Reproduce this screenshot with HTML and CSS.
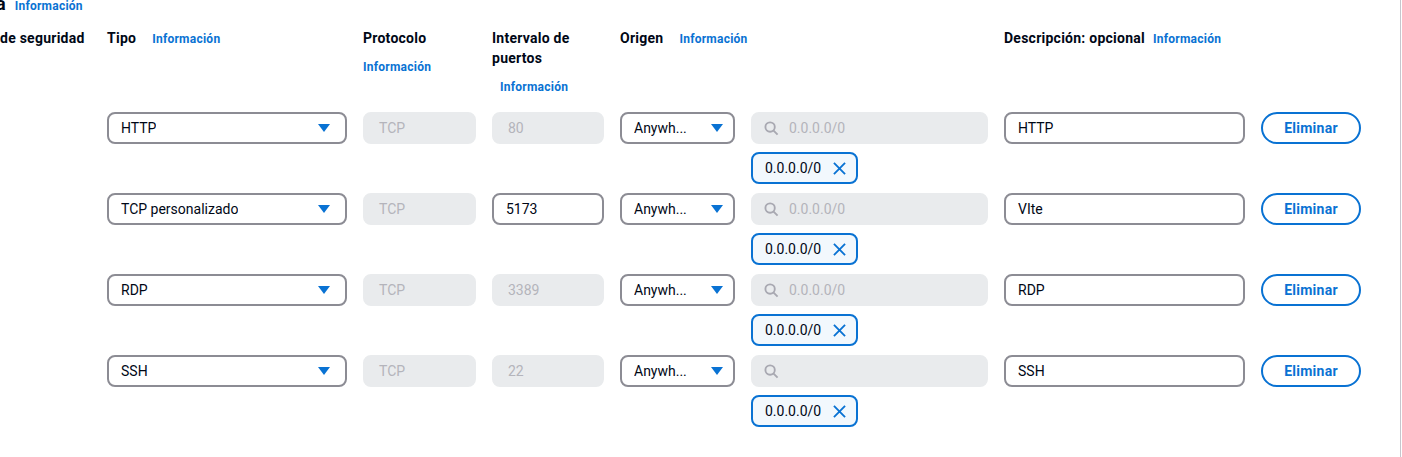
FILE: index.html
```html
<!DOCTYPE html>
<html lang="es">
<head>
<meta charset="utf-8">
<title>Reglas de entrada</title>
<link rel="stylesheet" href="styles.css">
</head>
<body>
<div class="page">
  <div class="top"><span class="cut">a</span><a class="info top-info">Información</a></div>

  <div class="grid head">
    <div class="h">de seguridad</div>
    <div class="h">Tipo<a class="info gap16">Información</a></div>
    <div class="h">Protocolo<a class="info block">Información</a></div>
    <div class="h">Intervalo de puertos<a class="info block indent">Información</a></div>
    <div class="h span2">Origen<a class="info gap16">Información</a></div>
    <div class="h">Descripción: opcional<a class="info gap8">Información</a></div>
    <div></div>
  </div>

  <div class="grid row">
    <div></div>
    <div class="select wide"><span class="val">HTTP</span><svg class="caret" viewBox="0 0 12 8"><path d="M0 0h12L6 8z"/></svg></div>
    <div class="field disabled">TCP</div>
    <div class="field disabled">80</div>
    <div class="select narrow"><span class="val">Anywh...</span><svg class="caret" viewBox="0 0 12 8"><path d="M0 0h12L6 8z"/></svg></div>
    <div class="source">
      <div class="field disabled search"><svg class="mag" viewBox="0 0 16 16"><circle cx="6.5" cy="6.5" r="5"/><path d="M10.2 10.2L14.5 14.5"/></svg><span>0.0.0.0/0</span></div>
      <div class="token">0.0.0.0/0<svg class="x" viewBox="0 0 14 14"><path d="M1 1L13 13M13 1L1 13"/></svg></div>
    </div>
    <div class="field">HTTP</div>
    <div><button class="btn">Eliminar</button></div>
  </div>

  <div class="grid row">
    <div></div>
    <div class="select wide"><span class="val">TCP personalizado</span><svg class="caret" viewBox="0 0 12 8"><path d="M0 0h12L6 8z"/></svg></div>
    <div class="field disabled">TCP</div>
    <div class="field">5173</div>
    <div class="select narrow"><span class="val">Anywh...</span><svg class="caret" viewBox="0 0 12 8"><path d="M0 0h12L6 8z"/></svg></div>
    <div class="source">
      <div class="field disabled search"><svg class="mag" viewBox="0 0 16 16"><circle cx="6.5" cy="6.5" r="5"/><path d="M10.2 10.2L14.5 14.5"/></svg><span>0.0.0.0/0</span></div>
      <div class="token">0.0.0.0/0<svg class="x" viewBox="0 0 14 14"><path d="M1 1L13 13M13 1L1 13"/></svg></div>
    </div>
    <div class="field">VIte</div>
    <div><button class="btn">Eliminar</button></div>
  </div>

  <div class="grid row">
    <div></div>
    <div class="select wide"><span class="val">RDP</span><svg class="caret" viewBox="0 0 12 8"><path d="M0 0h12L6 8z"/></svg></div>
    <div class="field disabled">TCP</div>
    <div class="field disabled">3389</div>
    <div class="select narrow"><span class="val">Anywh...</span><svg class="caret" viewBox="0 0 12 8"><path d="M0 0h12L6 8z"/></svg></div>
    <div class="source">
      <div class="field disabled search"><svg class="mag" viewBox="0 0 16 16"><circle cx="6.5" cy="6.5" r="5"/><path d="M10.2 10.2L14.5 14.5"/></svg><span>0.0.0.0/0</span></div>
      <div class="token">0.0.0.0/0<svg class="x" viewBox="0 0 14 14"><path d="M1 1L13 13M13 1L1 13"/></svg></div>
    </div>
    <div class="field">RDP</div>
    <div><button class="btn">Eliminar</button></div>
  </div>

  <div class="grid row">
    <div></div>
    <div class="select wide"><span class="val">SSH</span><svg class="caret" viewBox="0 0 12 8"><path d="M0 0h12L6 8z"/></svg></div>
    <div class="field disabled">TCP</div>
    <div class="field disabled">22</div>
    <div class="select narrow"><span class="val">Anywh...</span><svg class="caret" viewBox="0 0 12 8"><path d="M0 0h12L6 8z"/></svg></div>
    <div class="source">
      <div class="field disabled search"><svg class="mag" viewBox="0 0 16 16"><circle cx="6.5" cy="6.5" r="5"/><path d="M10.2 10.2L14.5 14.5"/></svg><span></span></div>
      <div class="token">0.0.0.0/0<svg class="x" viewBox="0 0 14 14"><path d="M1 1L13 13M13 1L1 13"/></svg></div>
    </div>
    <div class="field">SSH</div>
    <div><button class="btn">Eliminar</button></div>
  </div>
</div>
</body>
</html>
```

FILE: styles.css
```css
html, body {
  margin: 0;
  padding: 0;
  background: #ffffff;
}

body {
  font-family: Roboto, "Open Sans", Arial, sans-serif;
  color: #000716;
  font-size: 14px;
}

.page {
  box-sizing: border-box;
  width: 1401px;
  min-height: 457px;
  border-right: 1px solid #c6c6cd;
  overflow: hidden;
}

.top {
  height: 14px;
  font-size: 12px;
  line-height: 12px;
  white-space: nowrap;
}

.cut {
  font-size: 18px;
  font-weight: 700;
  line-height: 8px;
  margin-left: -4px;
}

.info {
  color: #0972d3;
  font-size: 12px;
  font-weight: 700;
  line-height: 16px;
  letter-spacing: 0.25px;
  cursor: pointer;
}

.top-info {
  line-height: 12px;
  margin-left: 9px;
}

.grid {
  display: grid;
  grid-template-columns: 91px 240px 113px 112px 115px 237px 241px 100px;
  column-gap: 16px;
  align-items: start;
}

.head {
  margin-top: 14px;
  margin-bottom: 17px;
}

.h {
  font-size: 14px;
  font-weight: 700;
  line-height: 20px;
  letter-spacing: 0.25px;
}

.span2 {
  grid-column: span 2;
}

.gap16 {
  margin-left: 16px;
}

.gap8 {
  margin-left: 8px;
}

.block {
  display: block;
  margin-top: 11px;
}

.indent {
  padding-left: 8px;
}

.row {
  margin-bottom: 9px;
}

.select,
.field {
  box-sizing: border-box;
  height: 32px;
  border: 2px solid #8c8c94;
  border-radius: 8px;
  display: flex;
  align-items: center;
  font-size: 14px;
  line-height: 20px;
  padding: 0 12px;
  white-space: nowrap;
  overflow: hidden;
  background: #ffffff;
}

.select {
  justify-content: space-between;
}

.select.wide {
  padding-right: 15px;
}

.select.narrow {
  padding-right: 10px;
}

.val {
  overflow: hidden;
  text-overflow: ellipsis;
}

.caret {
  width: 12px;
  height: 8px;
  flex: none;
  fill: #0972d3;
}

.field.disabled {
  background: #e9ebed;
  border-color: #e9ebed;
  color: #b4b4bb;
  padding-left: 14px;
}

.field.search {
  padding-left: 11px;
}

.mag {
  width: 15px;
  height: 15px;
  flex: none;
  fill: none;
  stroke: #a8a8b1;
  stroke-width: 2;
  margin-right: 10px;
}

.source {
  display: flex;
  flex-direction: column;
  align-items: flex-start;
  gap: 8px;
}

.source .search {
  width: 100%;
}

.token {
  box-sizing: border-box;
  height: 32px;
  border: 2px solid #0972d3;
  border-radius: 8px;
  background: #f2f8fd;
  display: flex;
  align-items: center;
  padding: 0 10px 0 12px;
  font-size: 14px;
  line-height: 20px;
  color: #000716;
}

.x {
  width: 13px;
  height: 13px;
  margin-left: 12px;
  fill: none;
  stroke: #0972d3;
  stroke-width: 2;
}

.btn {
  box-sizing: border-box;
  width: 100px;
  height: 32px;
  border: 2px solid #0972d3;
  border-radius: 20px;
  background: #ffffff;
  color: #0972d3;
  font-family: Roboto, "Open Sans", Arial, sans-serif;
  font-size: 14px;
  font-weight: 700;
  letter-spacing: 0.25px;
  padding: 0;
  cursor: pointer;
}
```
